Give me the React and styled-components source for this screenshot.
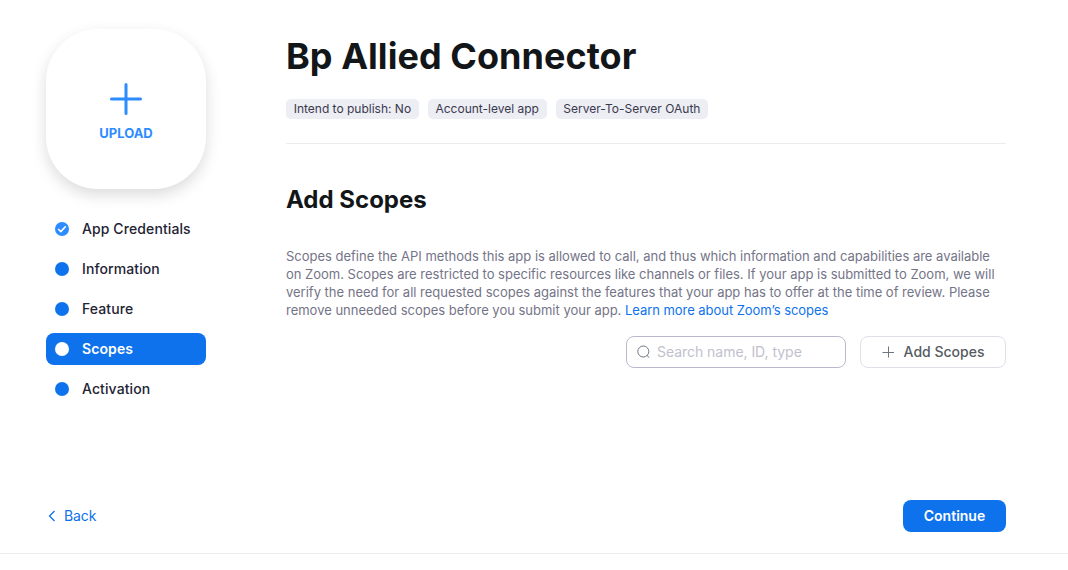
import React from "react";
import styled, { createGlobalStyle } from "styled-components";

const GlobalStyle = createGlobalStyle`
  * {
    box-sizing: border-box;
  }
  body {
    margin: 0;
    background: #fff;
    color: #131619;
    font-family: Inter, "Liberation Sans", sans-serif;
  }
  h1, h2, p, ul {
    margin: 0;
    padding: 0;
  }
  button, input {
    font-family: inherit;
  }
`;

const Page = styled.div`
  height: 554px;
  padding: 29px 62px 21px 46px;
  border-bottom: 1px solid #ededf0;
  display: flex;
  flex-direction: column;
  justify-content: space-between;
`;

const Body = styled.div`
  display: flex;
  gap: 80px;
`;

const Sidebar = styled.aside`
  width: 160px;
  flex-shrink: 0;
`;

const UploadBox = styled.button`
  width: 160px;
  height: 160px;
  padding: 6px 0 0;
  border: none;
  border-radius: 52px;
  background: #fff;
  box-shadow: 0 6px 15px rgba(0, 0, 0, 0.14);
  display: flex;
  flex-direction: column;
  align-items: center;
  justify-content: center;
  gap: 10px;
`;

const UploadText = styled.span`
  color: #2d8cff;
  font-size: 13px;
  line-height: 16px;
  font-weight: 700;
`;

const StepList = styled.ul`
  margin-top: 24px;
  list-style: none;
  display: flex;
  flex-direction: column;
  gap: 8px;
`;

const Step = styled.li`
  height: 32px;
  padding-left: 9px;
  border-radius: 8px;
  display: flex;
  align-items: center;
  gap: 13px;
  font-size: 14px;
  letter-spacing: 0.1px;
  font-weight: ${(props) => (props.$active ? 600 : 500)};
  color: ${(props) => (props.$active ? "#fff" : "#232333")};
  background: ${(props) => (props.$active ? "#0e72ed" : "transparent")};
`;

const StepName = styled.span`
  padding-bottom: 2px;
`;

const Dot = styled.span`
  width: 14px;
  height: 14px;
  border-radius: 50%;
  background: ${(props) => (props.$active ? "#fff" : "#0e72ed")};
`;

const Main = styled.main`
  width: 720px;
`;

const Title = styled.h1`
  padding-top: 5px;
  font-size: 36px;
  line-height: 44px;
  font-weight: 700;
  letter-spacing: 0.04px;
`;

const TagRow = styled.div`
  margin-top: 21px;
  padding-bottom: 24px;
  border-bottom: 1px solid #ededf0;
  display: flex;
  gap: 9px;
`;

const Tag = styled.span`
  height: 20px;
  padding: 0 7.7px;
  border-radius: 5px;
  background: #ededf4;
  color: #39394d;
  font-size: 12px;
  line-height: 20px;
  white-space: nowrap;
`;

const SectionTitle = styled.h2`
  margin-top: 40px;
  font-size: 24px;
  line-height: 32px;
  font-weight: 700;
`;

const Description = styled.p`
  margin-top: 31px;
  color: #747487;
  font-size: 13px;
  line-height: 18px;
  letter-spacing: -0.01px;
  white-space: nowrap;
`;

const Link = styled.a`
  color: #0e72ed;
  letter-spacing: -0.05px;
`;

const Controls = styled.div`
  margin-top: 17px;
  display: flex;
  justify-content: flex-end;
  gap: 14px;
`;

const SearchBox = styled.label`
  width: 220px;
  height: 32px;
  padding: 0 10px;
  border: 1px solid #babacc;
  border-radius: 8px;
  display: flex;
  align-items: center;
  gap: 6px;
`;

const SearchInput = styled.input`
  min-width: 0;
  flex: 1;
  padding: 0;
  border: none;
  outline: none;
  font-size: 14px;
  line-height: 20px;
  letter-spacing: -0.04px;
  color: #131619;

  &::placeholder {
    color: #c1c1cd;
  }
`;

const AddButton = styled.button`
  width: 146px;
  height: 32px;
  padding: 0 0 1px;
  border: 1px solid #dfdfe9;
  border-radius: 8px;
  background: #fff;
  color: #555b62;
  font-size: 14px;
  font-weight: 500;
  display: flex;
  align-items: center;
  justify-content: center;
  gap: 10px;
`;

const Footer = styled.footer`
  display: flex;
  align-items: center;
  justify-content: space-between;
`;

const BackButton = styled.button`
  padding: 0 0 1px 2px;
  border: none;
  background: none;
  color: #0e72ed;
  font-size: 14px;
  letter-spacing: -0.1px;
  display: flex;
  align-items: center;
  gap: 8px;
`;

const ContinueButton = styled.button`
  width: 103px;
  height: 32px;
  padding: 0 0 2px;
  border: none;
  border-radius: 8px;
  background: #0e72ed;
  color: #fff;
  font-size: 14px;
  font-weight: 600;
`;

const UploadIcon = () => (
  <svg width="32" height="32" viewBox="0 0 32 32" fill="none">
    <path d="M16 1.5v29M1.5 16h29" stroke="#2d8cff" strokeWidth="3" strokeLinecap="round" />
  </svg>
);

const CheckIcon = () => (
  <svg width="14" height="14" viewBox="0 0 14 14" fill="none">
    <circle cx="7" cy="7" r="7" fill="#2d8cff" />
    <path d="M3.7 7.5l2.2 2.1 4.4-4.8" stroke="#fff" strokeWidth="1.7" strokeLinecap="round" />
  </svg>
);

const SearchIcon = () => (
  <svg width="14" height="14" viewBox="0 0 14 14" fill="none" stroke="#6e7680">
    <circle cx="6.3" cy="6.5" r="5.5" />
    <path d="M10.2 10.5l1.7 1.9" strokeLinecap="round" />
  </svg>
);

const PlusIcon = () => (
  <svg width="12" height="12" viewBox="0 0 12 12" fill="none">
    <path d="M6.5 .5v11M.5 6.5h11.5" stroke="#6e7680" />
  </svg>
);

const BackIcon = () => (
  <svg width="8" height="12" viewBox="0 0 8 12" fill="none">
    <path d="M6.5 1L1.5 6l5 5" stroke="#0e72ed" strokeWidth="1.3" />
  </svg>
);

const steps = [
  { name: "App Credentials", done: true },
  { name: "Information" },
  { name: "Feature" },
  { name: "Scopes", active: true },
  { name: "Activation" },
];

const tags = ["Intend to publish: No", "Account-level app", "Server-To-Server OAuth"];

const App = () => {
  return (
    <>
      <GlobalStyle />
      <Page>
        <Body>
          <Sidebar>
            <UploadBox>
              <UploadIcon />
              <UploadText>UPLOAD</UploadText>
            </UploadBox>
            <StepList>
              {steps.map((step) => (
                <Step key={step.name} $active={step.active}>
                  {step.done ? <CheckIcon /> : <Dot $active={step.active} />}
                  <StepName>{step.name}</StepName>
                </Step>
              ))}
            </StepList>
          </Sidebar>
          <Main>
            <Title>Bp Allied Connector</Title>
            <TagRow>
              {tags.map((tag) => (
                <Tag key={tag}>{tag}</Tag>
              ))}
            </TagRow>
            <SectionTitle>Add Scopes</SectionTitle>
            <Description>
              Scopes define the API methods this app is allowed to call, and thus which information and capabilities are available
              <br />
              on Zoom. Scopes are restricted to specific resources like channels or files. If your app is submitted to Zoom, we will
              <br />
              verify the need for all requested scopes against the features that your app has to offer at the time of review. Please
              <br />
              remove unneeded scopes before you submit your app. <Link>Learn more about Zoom’s scopes</Link>
            </Description>
            <Controls>
              <SearchBox>
                <SearchIcon />
                <SearchInput placeholder="Search name, ID, type" />
              </SearchBox>
              <AddButton>
                <PlusIcon />
                Add Scopes
              </AddButton>
            </Controls>
          </Main>
        </Body>
        <Footer>
          <BackButton>
            <BackIcon />
            Back
          </BackButton>
          <ContinueButton>Continue</ContinueButton>
        </Footer>
      </Page>
    </>
  );
};

export default App;
